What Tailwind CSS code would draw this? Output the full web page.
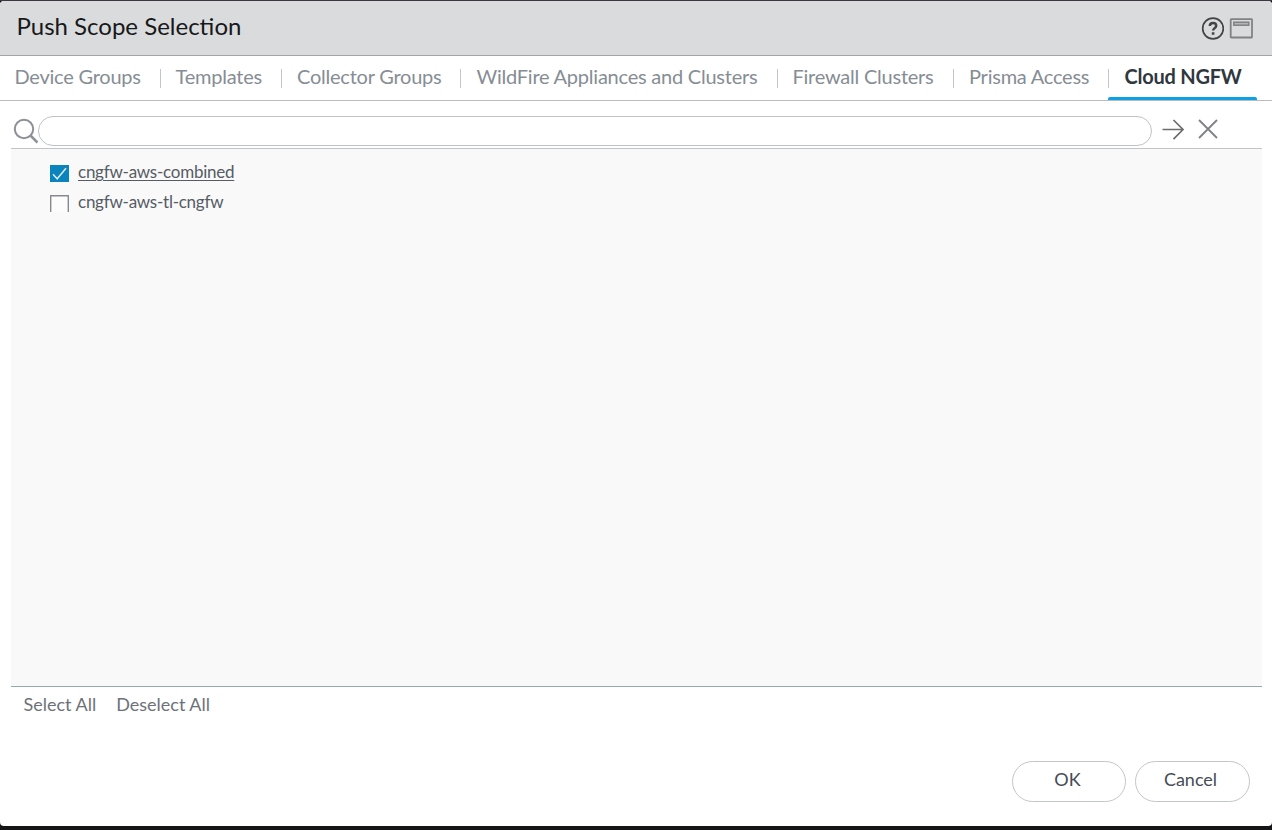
<!DOCTYPE html>
<html lang="en">
<head>
<meta charset="utf-8">
<title>Push Scope Selection</title>
<script src="https://cdn.jsdelivr.net/npm/@tailwindcss/browser@4"></script>
</head>
<body class="h-[830px] w-[1272px] overflow-hidden bg-[#151417] font-['Lato',sans-serif]">
<div class="h-px bg-[#3a383c]"></div>
<div class="flex h-[825px] flex-col overflow-hidden rounded-[4px] bg-white">
  <header class="flex h-[55px] shrink-0 items-center justify-between border-b border-[#a3a5a7] bg-[#dadbdd] pl-[16.5px] pr-[19px]">
    <h1 class="pb-[5px] text-[24px] leading-[30px] text-[#17181a]">Push Scope Selection</h1>
    <div class="flex items-center gap-[5px]">
      <svg class="size-6" viewBox="0 0 24 24" fill="none" stroke="#444446"><circle cx="13" cy="12.500" r="10.300" stroke-width="1.700"/><path d="M9.800 10C9.900 8 11.200 7 13 7c1.900 0 3.200 1.100 3.200 2.700 0 2.300-3.100 2.500-3.100 4.900" stroke-width="2.500"/><path d="M13.100 16.300v2.400" stroke-width="2.600"/></svg>
      <svg class="h-[22px] w-6" viewBox="0 0 24 22" fill="none" stroke="#808284"><rect x="1.700" y="2.200" width="21.300" height="18.300" rx=".5" stroke-width="1.800"/><rect x="4.800" y="5.200" width="15" height="3" stroke-width="1.500" fill="#b5b6b8"/></svg>
    </div>
  </header>
  <nav class="flex h-[45px] shrink-0 border-b border-[#b9bbbd] text-[20px] leading-6 tracking-[-0.23px] text-[#868d94]">
    <div class="w-[160px] whitespace-nowrap pl-[14.5px] pt-2">Device Groups</div>
    <div class="mt-[13px] h-[19px] w-px bg-[#c0c6cb]"></div>
    <div class="w-[120px] whitespace-nowrap pl-[14.5px] pt-2">Templates</div>
    <div class="mt-[13px] h-[19px] w-px bg-[#c0c6cb]"></div>
    <div class="w-[178px] whitespace-nowrap pl-[15px] pt-2">Collector Groups</div>
    <div class="mt-[13px] h-[19px] w-px bg-[#c0c6cb]"></div>
    <div class="w-[316px] whitespace-nowrap pl-[15.5px] pt-2">WildFire Appliances and Clusters</div>
    <div class="mt-[13px] h-[19px] w-px bg-[#c0c6cb]"></div>
    <div class="w-[175px] whitespace-nowrap pl-[14.5px] pt-2">Firewall Clusters</div>
    <div class="mt-[13px] h-[19px] w-px bg-[#c0c6cb]"></div>
    <div class="w-[154px] whitespace-nowrap pl-[15px] pt-2">Prisma Access</div>
    <div class="flex h-11 w-[149px] flex-col justify-between">
      <div class="mt-[13px] h-[19px] border-l border-[#c0c6cb] pl-[15.5px]"><div class="-mt-[5px] whitespace-nowrap font-bold text-[#30373e]">Cloud NGFW</div></div>
      <div class="h-[3px] rounded-t-[2px] bg-[#0ea0e4]"></div>
    </div>
  </nav>
  <div class="flex h-[47px] shrink-0 items-start pl-[13px] pt-[15px]">
    <svg class="mt-[2px] h-[26px] w-[25px]" viewBox="0 0 25 26" fill="none" stroke="#8d9195"><circle cx="11" cy="11" r="9.200" stroke-width="2"/><path d="M17.500 17.500l7 7" stroke-width="2.500"/></svg>
    <input aria-label="Search" class="h-[30px] w-[1114px] rounded-full border border-[#bfc1c3] px-4 text-base outline-none">
    <svg class="ml-[10px] mt-[3px] h-[22px] w-[23px]" viewBox="0 0 23 22" fill="none" stroke="#6c6d6f" stroke-width="1.700"><path d="M.5 10.500h20.500M11.500 1l9.500 9.500-9.500 9.700"/></svg>
    <svg class="ml-[12px] mt-[2px] size-[22px]" viewBox="0 0 22 22" fill="none" stroke="#808183" stroke-width="1.800"><path d="M2 2l18 18M20 2l-18 18"/></svg>
  </div>
  <main class="ml-[11px] h-[539px] w-[1251px] shrink-0 border-b border-t border-t-[#c2c5c8] border-b-[#93a9b6] bg-[#f9f9f9] pl-[39px] pt-2 text-[17px] leading-[30px] tracking-[-0.24px] text-[#555c64]">
    <label class="flex h-[30px] gap-[9px]">
      <svg class="mt-2 h-[17px] w-[19px]" viewBox="0 0 19 17"><path fill="#0b83bd" d="M0 0h19v17H0z"/><path d="M3 9.300l4.200 4.500L16 3.300" fill="none" stroke="#d9edf6" stroke-width="1.500"/></svg>
      <span class="underline decoration-1 underline-offset-2">cngfw-aws-combined</span>
    </label>
    <label class="flex h-[30px] gap-[9px]">
      <svg class="mt-2 h-[17px] w-[19px]" viewBox="0 0 19 17"><path d="M.7 17V.7h17.600V17" fill="#fcfcfc" stroke="#858a8e" stroke-width="1.400"/></svg>
      <span>cngfw-aws-tl-cngfw</span>
    </label>
  </main>
  <div class="flex h-9 shrink-0 gap-5 pl-[23.5px] text-[18px] leading-[34px] text-[#6d7278]">
    <span>Select All</span><span>Deselect All</span>
  </div>
  <footer class="flex grow items-end justify-end gap-[9px] pb-6 pr-[22px] text-[18px] text-[#454c54]">
    <button class="h-[41px] w-[114px] rounded-full border border-[#c4c5c7] pb-[5px] pr-[3px]">OK</button>
    <button class="h-[41px] w-[115px] rounded-full border border-[#c4c5c7] pb-[5px] pr-1">Cancel</button>
  </footer>
</div>
</body>
</html>
